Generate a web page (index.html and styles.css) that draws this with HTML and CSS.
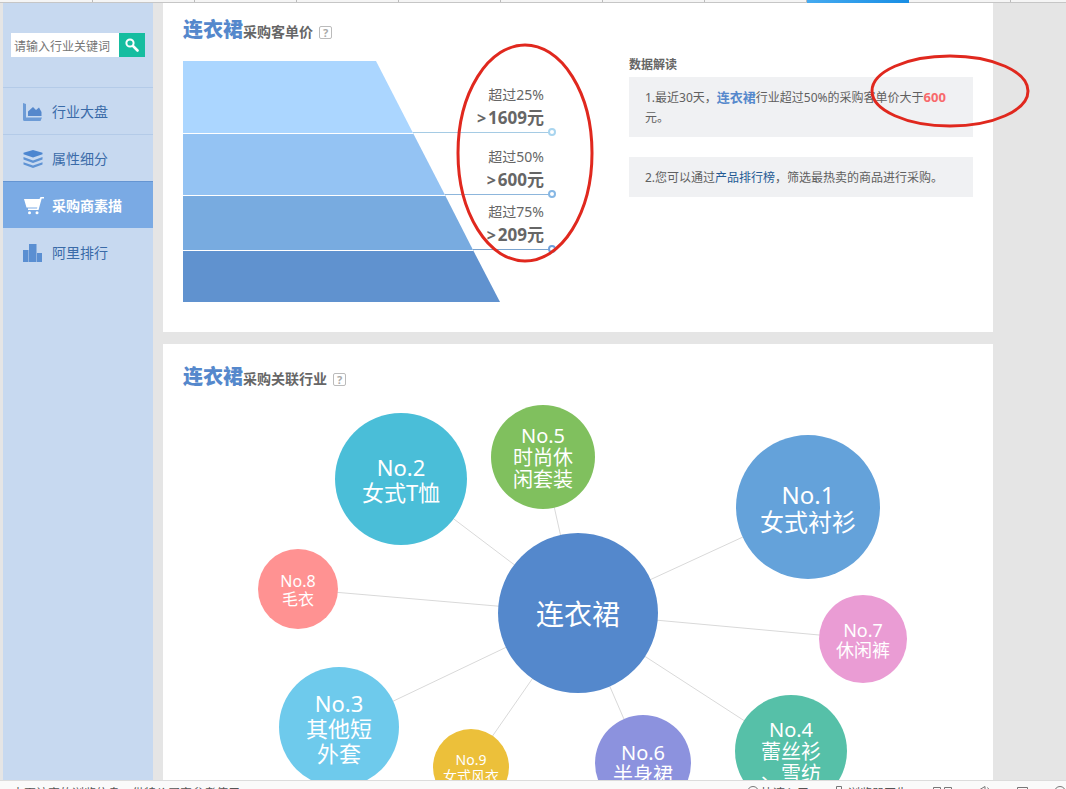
FILE: index.html
```html
<!DOCTYPE html>
<html lang="zh-CN">
<head>
<meta charset="utf-8">
<title>采购商素描</title>
<link rel="stylesheet" href="styles.css">
</head>
<body>
<div class="tabs"><span class="tab tab-first"></span><span class="tab"></span><span class="tab"></span><span class="tab"></span><span class="tab"></span><span class="tab"></span><span class="tab"></span><span class="tab"></span><span class="tab tab-on"></span><span class="tab"></span></div>
<div class="page">
  <aside class="sidebar">
    <form class="search">
      <input class="search-box" type="text" aria-label="行业关键词" placeholder="请输入行业关键词">
      <button class="search-btn" type="button" aria-label="搜索">
        <svg width="14" height="14" viewBox="0 0 14 14"><circle cx="5" cy="5" r="3.6" fill="none" stroke="#fff" stroke-width="2"/><path d="M8 8l4.5 4.5" stroke="#fff" stroke-width="2.6" stroke-linecap="round"/></svg>
      </button>
    </form>
    <nav class="menu">
      <a class="item" href="#"><svg class="icon" viewBox="0 0 20 20"><path d="M0 1l3 1v13.500h16l-1.500 3.500H1.500Q0 19 0 17.500z" fill="#6c9bd6"/><path d="M5 14V9.500L10 5l3 3 3-2.500 2.500 4.500v4z" fill="#5588cc"/></svg>行业大盘</a>
      <a class="item" href="#"><svg class="icon" viewBox="0 0 20 20"><path d="M10 1l9.500 2.800v1.400L10 8.400.500 5.200V3.800z" fill="#4c86d0"/><path d="M.500 8l9.500 3.400L19.500 8v2.500L10 14 .500 10.500zM.500 13.200l9.500 3.300 9.500-3.300v2.400L10 19 .500 15.600z" fill="#5f93d4"/></svg>属性细分</a>
      <a class="item item-on" href="#"><svg class="icon" viewBox="0 0 20 20"><path d="M1 3h15.500L17.500 1h3.500v1.500h-2.300L15.500 14H5v-1.500h9l.300-1H3.500z" fill="#fff"/><circle cx="6.500" cy="16.800" r="1.500" fill="#fff"/><circle cx="14" cy="16.800" r="1.500" fill="#fff"/></svg>采购商素描</a>
      <a class="item" href="#"><svg class="icon" viewBox="0 0 20 20"><path d="M0 7h5.500v12H0zM6 1h7.500v18H6zM14 10h5v9h-5z" fill="#5a8fd2"/></svg>阿里排行</a>
    </nav>
  </aside>
  <main class="content">
    <section class="card price">
      <h2 class="title"><b class="key">连衣裙</b>采购客单价<span class="help">?</span></h2>
      <div class="columns">
        <div class="funnel">
          <svg class="funnel-shape" width="373" height="241" viewBox="0 0 373 241">
            <path d="M0 0H193L230 72H0z" fill="#abd6ff"/>
            <path d="M0 72H230L262 134H0z" fill="#94c3f3"/>
            <path d="M0 134H262L290 189H0z" fill="#78abe0"/>
            <path d="M0 189H290L317 241H0z" fill="#6092cf"/>
            <path d="M0 72.500H230M0 134.500H262M0 189.500H290" stroke="#fff"/>
            <g fill="none"><path d="M230 71.500H366" stroke="#a5cbe4"/><path d="M262 133.500H366" stroke="#8db6dc"/><path d="M290 188.500H366" stroke="#7aa3ce"/></g>
            <g fill="#fff" stroke-width="2"><circle cx="369" cy="71" r="3" stroke="#a9d5ef"/><circle cx="369" cy="133" r="3" stroke="#86b7e4"/><circle cx="369" cy="188" r="3" stroke="#6ea0dc"/></g>
          </svg>
          <p class="level">超过25%<strong><i class="gt">&gt;</i>1609元</strong></p>
          <p class="level">超过50%<strong><i class="gt">&gt;</i>600元</strong></p>
          <p class="level">超过75%<strong><i class="gt">&gt;</i>209元</strong></p>
        </div>
        <div class="insight">
          <h3 class="subtitle">数据解读</h3>
          <p class="note">1.最近30天，<b class="key-sm">连衣裙</b>行业超过50%的采购客单价大于<b class="hot">600</b>元。</p>
          <p class="note">2.您可以通过<a class="link" href="#">产品排行榜</a>，筛选最热卖的商品进行采购。</p>
        </div>
      </div>
      <svg class="mark mark-levels" viewBox="0 0 138 220"><ellipse cx="69" cy="110" rx="67" ry="108"/></svg>
      <svg class="mark mark-note" viewBox="0 0 160 74"><ellipse cx="80" cy="37" rx="78" ry="35"/></svg>
    </section>
    <section class="card related">
      <h2 class="title"><b class="key">连衣裙</b>采购关联行业<span class="help">?</span></h2>
      <div class="map">
        <svg class="spokes" width="790" height="440" viewBox="0 0 790 440"><path d="M395 215L625 109M395 215L218 81M395 215L156 329M395 215L608 353M395 215L360 59M395 215L460 365M395 215L680 241M395 215L115 191M395 215L288 369" stroke="#d9d9d9" fill="none"/></svg>
        <div class="node n0">连衣裙</div>
        <div class="node n1">No.1<br>女式衬衫</div>
        <div class="node n2">No.2<br>女式T恤</div>
        <div class="node n3">No.3<br>其他短<br>外套</div>
        <div class="node n4">No.4<br>蕾丝衫<br>、雪纺</div>
        <div class="node n5">No.5<br>时尚休<br>闲套装</div>
        <div class="node n6">No.6<br>半身裙</div>
        <div class="node n7">No.7<br>休闲裤</div>
        <div class="node n8">No.8<br>毛衣</div>
        <div class="node n9">No.9<br>女式风衣</div>
      </div>
    </section>
  </main>
</div>
<footer class="status">
  <span class="status-text">本页访客的浏览信息，供特价买家参考使用</span>
  <span class="tools">
    <span class="tool"><svg width="14" height="12" viewBox="0 0 14 12"><circle cx="6" cy="6" r="5.500"/></svg>快速入口</span>
    <span class="tool"><svg width="14" height="12" viewBox="0 0 14 12"><path d="M2.500.500h5v5h2v6h-9v-6h2z"/></svg>浏览器医生</span>
    <svg width="20" height="12" viewBox="0 0 20 12"><path d="M.500 1.500h7v8h-7zM11.500 1.500h7v8h-7z"/></svg>
    <svg width="14" height="12" viewBox="0 0 14 12"><path d="M1 4l6-3.500v11L1 8zM9.500 1.500q4 4 0 9"/></svg>
    <svg width="12" height="12" viewBox="0 0 12 12"><path d="M.500 1.500h10v9H.500z"/></svg>
    <svg width="12" height="12" viewBox="0 0 12 12"><circle cx="6" cy="6" r="5.500"/></svg>
  </span>
</footer>
</body>
</html>
```
FILE: styles.css
```css
* { box-sizing: border-box; }
body {
  margin: 0;
  height: 100vh;
  display: flex;
  flex-direction: column;
  overflow: hidden;
  background: #e5e5e5;
  color: #666;
  font: 12px/20px "Noto Sans", "Noto Sans CJK SC", sans-serif;
}
h2, h3, p { margin: 0; }
a { text-decoration: none; }

.tabs {
  display: flex;
  flex: none;
  height: 3px;
  background: #f5f5f5;
  border-bottom: 1px solid #c6c6c6;
}
.tab { flex: none; width: 102px; border-right: 1px solid #bbb; }
.tab-first { width: 93px; }
.tab-on { height: 3px; background: linear-gradient(90deg, #45aaf0, #188ee4); border: 0; }

.page {
  display: flex;
  flex: 1;
  min-height: 0;
  gap: 10px;
  padding: 0 73px 0 3px;
  overflow: hidden;
}

.sidebar { flex: none; width: 150px; background: #c7d9f0; }
.search { display: flex; padding: 30px 8px; }
.search-box {
  flex: 1;
  min-width: 0;
  height: 24px;
  padding: 2px 3px 0;
  border: 0;
  background: #fff;
  font: inherit;
}
.search-box::placeholder { color: #757575; }
.search-btn {
  display: flex;
  align-items: center;
  justify-content: center;
  width: 26px;
  height: 24px;
  padding: 0;
  border: 0;
  background: #16bda0;
}
.item {
  display: flex;
  align-items: center;
  gap: 9px;
  height: 47px;
  padding: 2px 0 0 20px;
  border-top: 1px solid #b4cbe8;
  color: #3a6ba8;
  font-size: 14px;
}
.item-on { background: #7aaae4; border-color: #6595d2; color: #fff; font-weight: bold; }
.item-on + .item { border-color: #c7d9f0; }
.icon { flex: none; width: 20px; height: 20px; overflow: visible; }

.content { flex: 1; min-width: 0; display: flex; flex-direction: column; gap: 12px; }
.card { position: relative; flex: none; padding: 12px 20px 30px; background: #fff; }
.title {
  display: flex;
  align-items: baseline;
  height: 30px;
  line-height: 29px;
  font-size: 14px;
}
.key { color: #5588cc; font-size: 20px; }
.help {
  width: 13px;
  height: 13px;
  margin-left: 6px;
  border: 1px solid #bbb;
  border-radius: 2px;
  color: #aaa;
  font-size: 11px;
  line-height: 11px;
  text-align: center;
}

.columns { display: flex; justify-content: space-between; padding-top: 16px; }
.funnel {
  position: relative;
  display: grid;
  flex: none;
  width: 373px;
  grid-template-rows: 72px 62px 55px 52px;
}
.funnel-shape { position: absolute; left: 0; top: 0; }
.level {
  position: relative;
  align-self: end;
  padding: 0 12px 3px 0;
  font-size: 14px;
  line-height: 23px;
  text-align: right;
}
.level strong { display: block; font-size: 17px; }
.gt { margin-right: 2px; font-size: 16px; font-style: normal; }

.insight { width: 344px; margin-top: -7px; }
.subtitle { height: 23px; font-size: 12px; line-height: 22px; }
.note { margin-bottom: 20px; padding: 11px 16px 9px; background: #f0f1f3; color: #606060; }
.key-sm { color: #5588cc; font-size: 13px; line-height: 1; }
.hot { color: #f8696b; font-size: 13px; line-height: 1; }
.link { color: #245a94; }

.mark { position: absolute; z-index: 2; fill: none; stroke: #e0281e; stroke-width: 3; pointer-events: none; }
.mark-levels { left: 293px; top: 40px; width: 138px; height: 220px; }
.mark-note { right: -37px; top: 51px; width: 160px; height: 74px; }

.related { padding-top: 18px; }
.map { position: relative; width: 790px; height: 440px; margin: 6px auto 0; }
.spokes { position: absolute; left: 0; top: 0; }
.node {
  position: absolute;
  left: var(--x);
  top: var(--y);
  width: var(--d);
  height: var(--d);
  display: flex;
  align-items: center;
  justify-content: center;
  padding-top: 2px;
  transform: translate(-50%, -50%);
  border-radius: 50%;
  color: #fff;
  text-align: center;
  white-space: nowrap;
}
.n0 { --x: 395px; --y: 215px; --d: 160px; background: #5488cc; font-size: 28px; line-height: 32px; }
.n1 { --x: 625px; --y: 109px; --d: 144px; background: #64a2da; font-size: 24px; line-height: 27px; }
.n2 { --x: 218px; --y: 81px; --d: 132px; background: #4abed8; font-size: 22px; line-height: 25px; }
.n3 { --x: 156px; --y: 329px; --d: 120px; background: #6ecaec; font-size: 22px; line-height: 25px; }
.n4 { --x: 608px; --y: 353px; --d: 112px; background: #56c0a8; font-size: 20px; line-height: 22px; }
.n5 { --x: 360px; --y: 59px; --d: 104px; background: #80c05e; font-size: 20px; line-height: 22px; }
.n6 { --x: 460px; --y: 365px; --d: 96px; background: #8c92de; font-size: 20px; line-height: 22px; }
.n7 { --x: 680px; --y: 241px; --d: 88px; background: #ea9cd4; font-size: 18px; line-height: 20px; }
.n8 { --x: 115px; --y: 191px; --d: 80px; background: #ff9292; font-size: 16px; line-height: 18px; }
.n9 { --x: 288px; --y: 369px; --d: 76px; background: #ecc03a; font-size: 14px; line-height: 16px; }

.status {
  display: flex;
  flex: none;
  justify-content: space-between;
  height: 9px;
  padding: 3px 0 0 12px;
  overflow: hidden;
  border-top: 1px solid #dcdcdc;
  background: #fafafa;
  color: #555;
  line-height: 20px;
}
.tools { display: flex; gap: 25px; align-items: flex-start; }
.tools svg { flex: none; margin-top: 2px; fill: none; stroke: #777; }
.tool { display: flex; }
```
